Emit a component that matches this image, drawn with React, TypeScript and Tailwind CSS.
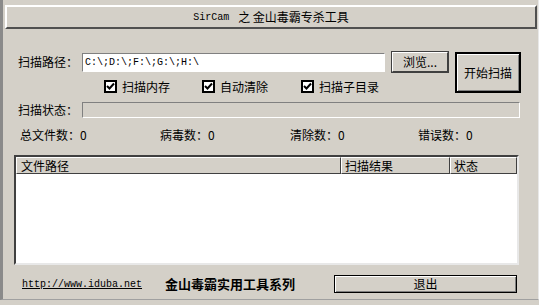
import React from "react";

const cjk = "font-['SimSun','Noto_Sans_CJK_SC',sans-serif]";

function Check({ label }: { label: string }) {
  return (
    <div className="flex items-center gap-[5px]">
      <div className="flex h-[13px] w-[13px] items-center justify-center border-2 border-black bg-white">
        <svg width="9" height="9" viewBox="0 0 9 9">
          <path d="M1 4 L3.5 6.5 L8 1.5" stroke="black" strokeWidth="2" fill="none" />
        </svg>
      </div>
      <span className="text-[12px] leading-none text-black">{label}</span>
    </div>
  );
}

export default function App() {
  return (
    <div
      className={`relative h-[305px] w-[539px] overflow-hidden bg-[#d4d0c8] ${cjk} text-black`}
    >
      <div className="flex h-[300px] flex-col border-l-[3px] border-b border-r border-l-[#8a8a8a] border-b-[#a0a0a0] border-r-[#e8e8e8] pl-px">
        {/* title */}
        <div className="mx-px mt-[5px] flex h-[24px] items-center justify-center border-2 border-t-white border-l-white border-b-[#505050] border-r-[#505050] text-[12px]">
          <span className="font-['Liberation_Mono',monospace] text-[10px]">SirCam</span>
          <span className="ml-[9px]">之 金山毒霸专杀工具</span>
        </div>

        {/* path + options */}
        <div className="mt-[23px] flex">
          <div className="flex flex-col">
            <div className="flex items-center">
              <span className="ml-[14px] w-[64px] text-[12px]">扫描路径：</span>
              <div className="flex h-[19px] w-[303px] items-center border border-t-[#808080] border-l-[#808080] border-b-white border-r-white bg-white pl-[2px] font-['Liberation_Mono',monospace] text-[10px]">
                C:\;D:\;F:\;G:\;H:\
              </div>
              <button className="ml-[7px] flex h-[20px] w-[56px] items-center justify-center border border-t-white border-l-white border-b-[#404040] border-r-[#404040] text-[12px] outline outline-1 outline-[#404040]">
                浏览...
              </button>
            </div>
            <div className="ml-[100px] mt-[8px] flex">
              <div className="w-[98px]">
                <Check label="扫描内存" />
              </div>
              <div className="w-[99px]">
                <Check label="自动清除" />
              </div>
              <Check label="扫描子目录" />
            </div>
          </div>
          <button className="ml-[7px] flex h-[41px] w-[66px] items-center justify-center border-2 border-black text-[12px] shadow-[inset_1px_1px_0_#fff,inset_-1px_-1px_0_#808080]">
            开始扫描
          </button>
        </div>

        {/* status */}
        <div className="mt-[8px] flex items-center">
          <span className="ml-[14px] w-[64px] text-[12px]">扫描状态：</span>
          <div className="h-[16px] w-[438px] border border-t-[#808080] border-l-[#808080] border-b-white border-r-white" />
        </div>

        {/* stats */}
        <div className="mt-[7px] flex text-[12px]">
          <span className="ml-[16px] w-[140px]">总文件数：0</span>
          <span className="w-[130px]">病毒数：0</span>
          <span className="w-[128px]">清除数：0</span>
          <span>错误数：0</span>
        </div>

        {/* list */}
        <div className="ml-[10px] mt-[11px] flex h-[110px] w-[505px] flex-col border-2 border-t-[#404040] border-l-[#404040] border-b-[#e8e8e8] border-r-[#e8e8e8] bg-white">
          <div className="flex h-[17px] bg-[#d4d0c8] text-[12px]">
            <div className="flex w-[325px] items-center border border-t-white border-l-white border-b-[#404040] border-r-[#404040] pl-[4px]">文件路径</div>
            <div className="flex w-[109px] items-center border border-t-white border-l-white border-b-[#404040] border-r-[#404040] pl-[3px]">扫描结果</div>
            <div className="flex w-[67px] items-center border border-t-white border-l-white border-b-[#404040] border-r-[#404040] pl-[3px]">状态</div>
          </div>
          <div className="flex-1" />
        </div>

        {/* footer */}
        <div className="mt-[10px] flex h-[18px] items-center">
          <span className="ml-[18px] w-[143px] font-['Liberation_Mono',monospace] text-[10px] underline">
            http://www.iduba.net
          </span>
          <span className="w-[169px] text-[13px] font-bold">金山毒霸实用工具系列</span>
          <button className="flex h-[18px] w-[183px] items-center justify-center border border-black text-[12px] shadow-[inset_1px_1px_0_#fff,inset_-1px_-1px_0_#808080]">
            退出
          </button>
        </div>
      </div>
    </div>
  );
}
